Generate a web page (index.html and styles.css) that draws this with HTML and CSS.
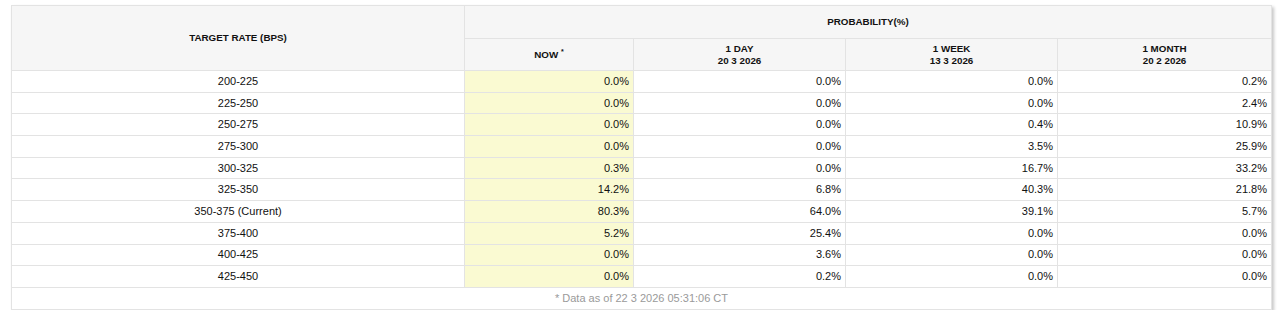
FILE: index.html
```html
<!DOCTYPE html>
<html>
<head>
<meta charset="utf-8">
<link rel="stylesheet" href="styles.css">
</head>
<body>
<div class="wrap">
<table class="prob">
  <colgroup>
    <col class="c-rate"><col class="c-now"><col class="c-day"><col class="c-week"><col class="c-month">
  </colgroup>
  <thead>
    <tr class="h1">
      <th rowspan="2">TARGET RATE (BPS)</th>
      <th colspan="4">PROBABILITY(%)</th>
    </tr>
    <tr class="h2">
      <th>NOW <sup>*</sup></th>
      <th>1 DAY<br>20 3 2026</th>
      <th>1 WEEK<br>13 3 2026</th>
      <th>1 MONTH<br>20 2 2026</th>
    </tr>
  </thead>
  <tbody>
    <tr><td class="rate">200-225</td><td class="now">0.0%</td><td>0.0%</td><td>0.0%</td><td>0.2%</td></tr>
    <tr><td class="rate">225-250</td><td class="now">0.0%</td><td>0.0%</td><td>0.0%</td><td>2.4%</td></tr>
    <tr><td class="rate">250-275</td><td class="now">0.0%</td><td>0.0%</td><td>0.4%</td><td>10.9%</td></tr>
    <tr><td class="rate">275-300</td><td class="now">0.0%</td><td>0.0%</td><td>3.5%</td><td>25.9%</td></tr>
    <tr><td class="rate">300-325</td><td class="now">0.3%</td><td>0.0%</td><td>16.7%</td><td>33.2%</td></tr>
    <tr><td class="rate">325-350</td><td class="now">14.2%</td><td>6.8%</td><td>40.3%</td><td>21.8%</td></tr>
    <tr><td class="rate">350-375 (Current)</td><td class="now">80.3%</td><td>64.0%</td><td>39.1%</td><td>5.7%</td></tr>
    <tr><td class="rate">375-400</td><td class="now">5.2%</td><td>25.4%</td><td>0.0%</td><td>0.0%</td></tr>
    <tr><td class="rate">400-425</td><td class="now">0.0%</td><td>3.6%</td><td>0.0%</td><td>0.0%</td></tr>
    <tr><td class="rate">425-450</td><td class="now">0.0%</td><td>0.2%</td><td>0.0%</td><td>0.0%</td></tr>
  </tbody>
  <tfoot>
    <tr><td colspan="5" class="foot">* Data as of 22 3 2026 05:31:06 CT</td></tr>
  </tfoot>
</table>
</div>
</body>
</html>
```
FILE: styles.css
```css
html, body {
  margin: 0;
  padding: 0;
  background: #ffffff;
}
.wrap {
  padding: 5px 0 0 11px;
}
.prob {
  width: 1260px;
  border-collapse: collapse;
  table-layout: fixed;
  font-family: "Liberation Sans", Arial, sans-serif;
  font-size: 11px;
  color: #111;
  border: 1px solid #dcdcdc;
  box-shadow: 2px 2px 3px rgba(0, 0, 0, 0.22);
}
.c-rate { width: 453px; }
.c-now { width: 169px; }
.c-day { width: 212px; }
.c-week { width: 212px; }
.c-month { width: 214px; }
.prob th, .prob td {
  border: 1px solid #e3e3e3;
  padding: 0 4px;
}
.prob th {
  background: #f6f6f6;
  font-size: 9.8px;
  font-weight: bold;
  color: #111;
  text-align: center;
  line-height: 12px;
}
.h1 th { height: 32px; }
.h2 th { height: 31px; }
.h2 sup {
  font-size: 7px;
  vertical-align: 4px;
  line-height: 0;
}
.prob tbody td {
  height: 20.7px;
  line-height: 13px;
  padding-top: 0;
  padding-bottom: 0;
  text-align: right;
}
.prob tbody td.rate {
  text-align: center;
}
.prob tbody td.now {
  background: #fafad2;
}
.prob td.foot {
  height: 21px;
  text-align: center;
  color: #9a9a9a;
  line-height: 13px;
}
```
